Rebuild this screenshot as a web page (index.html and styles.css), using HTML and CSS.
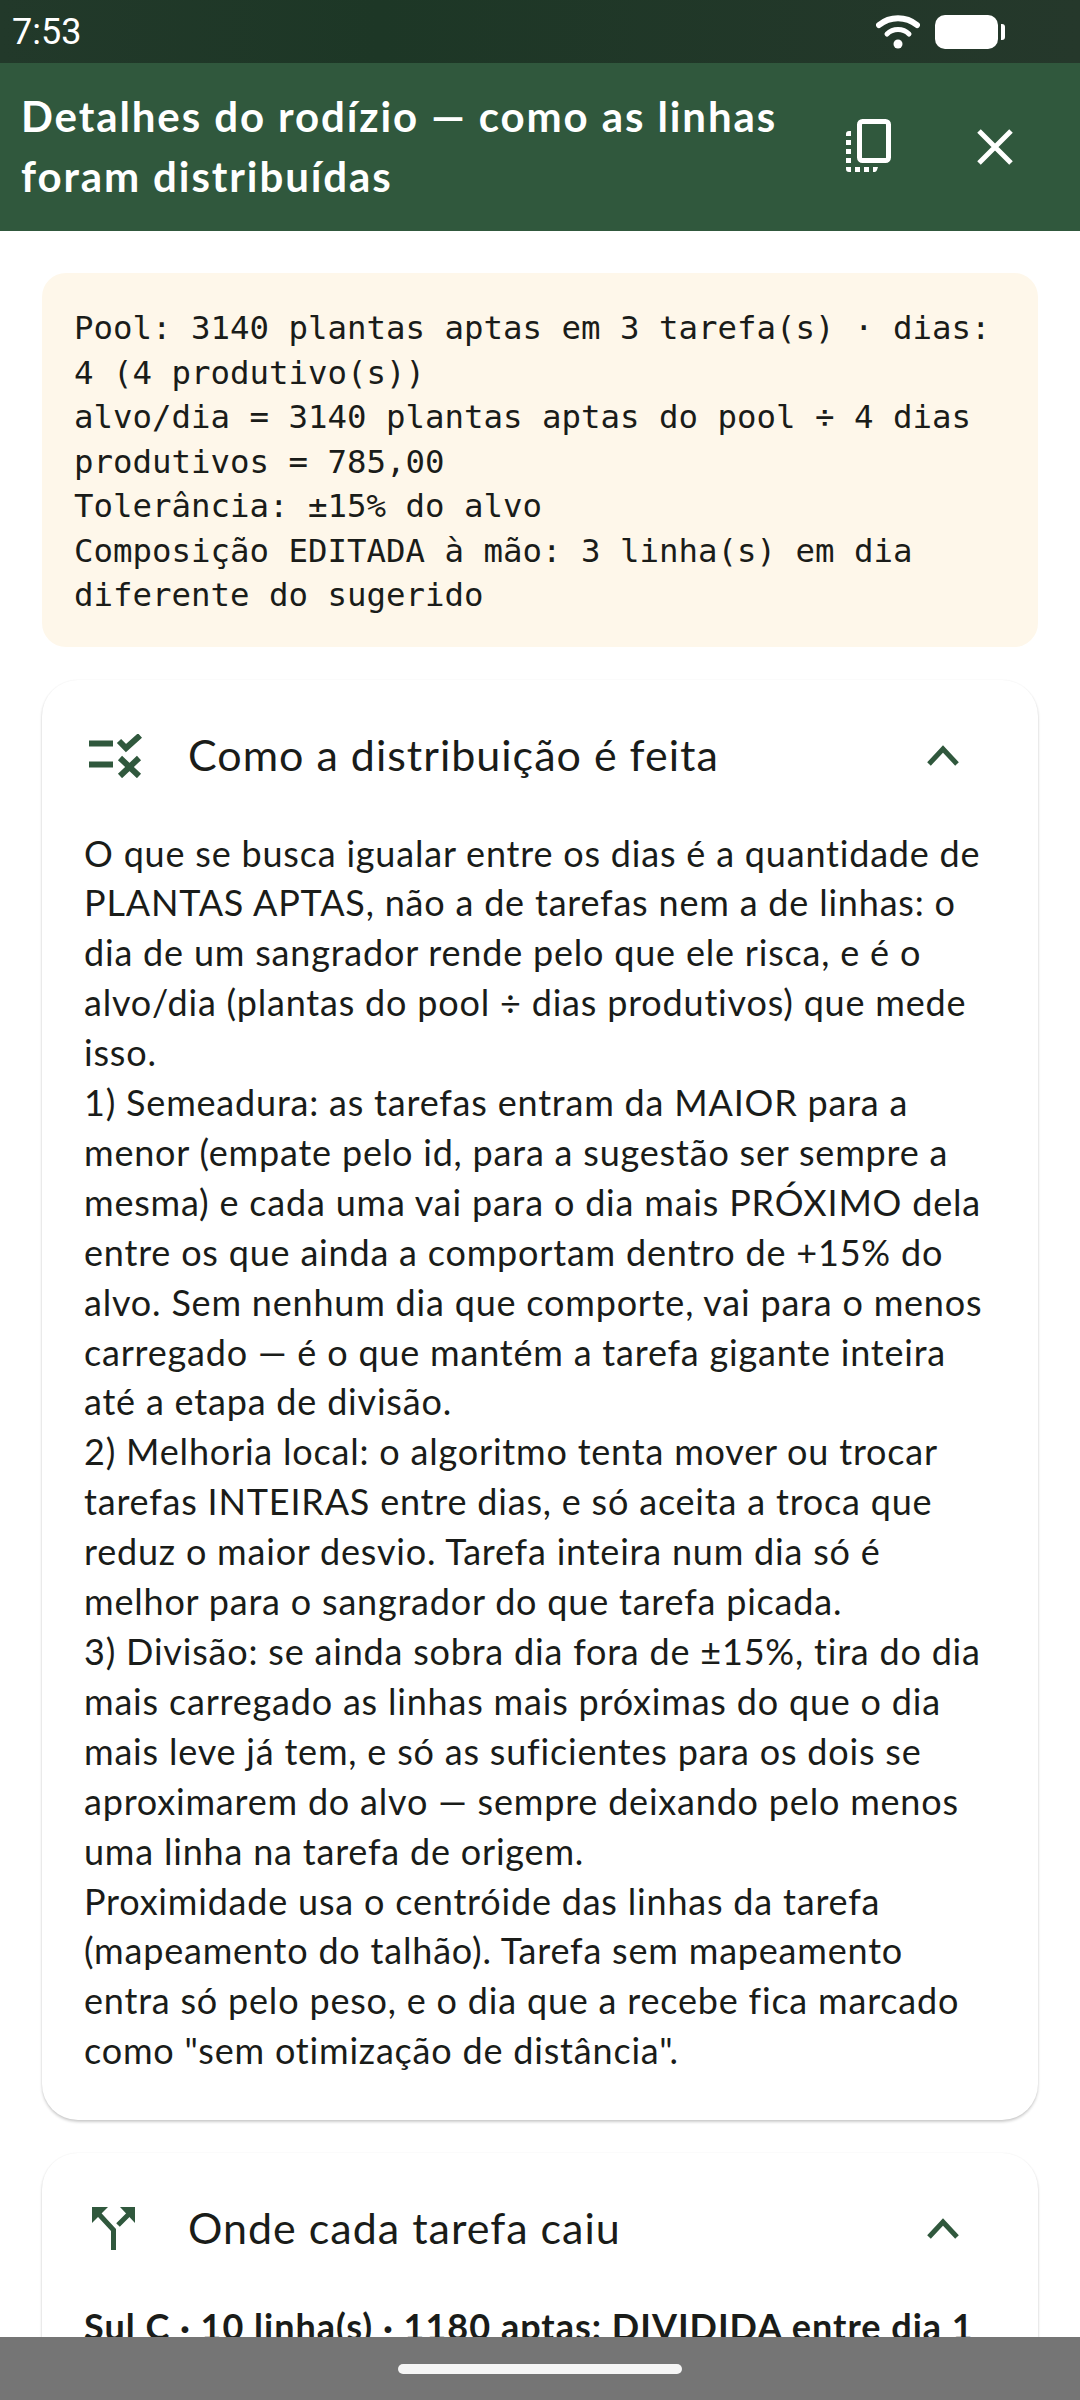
FILE: index.html
```html
<!DOCTYPE html>
<html lang="pt">
  <head>
    <meta charset="UTF-8" />
    <title>Detalhes do rodízio</title>
    <link rel="stylesheet" href="styles.css">
  </head>
  <body>
    <div class="screen">
      <div class="status-bar">
        <span class="clock">7:53</span>
        <div class="status-icons">
          <svg class="wifi" width="44" height="34" viewBox="0 0 44 34">
            <path d="M3 10 C14 1 30 1 41 10" fill="none" stroke="#fff" stroke-width="6" stroke-linecap="round" />
            <path d="M11 19 C17 13 27 13 33 19" fill="none" stroke="#fff" stroke-width="5" stroke-linecap="round" />
            <circle cx="22" cy="29" r="4.5" fill="#fff" />
          </svg>
          <div class="battery"></div>
          <div class="battery-tip"></div>
        </div>
      </div>

      <header class="app-bar">
        <h1 class="app-title">Detalhes do rodízio — como as linhas<br>foram distribuídas</h1>
        <button class="icon-btn copy-btn">
          <svg width="48" height="56" viewBox="0 0 48 56">
            <rect x="15.5" y="2.5" width="29" height="39" rx="3" fill="none" stroke="#fff" stroke-width="5" />
            <path d="M5 12 h2 v5 h-5 v-2 a3 3 0 0 1 3 -3 z M2 21 h5 v5 h-5 z M2 30 h5 v5 h-5 z M2 39 h5 v5 h-5 z M2 48 h5 v5 h-2 a3 3 0 0 1 -3 -3 z M11 48 h5 v5 h-5 z M20 48 h5 v5 h-5 z M29 48 h5 l-1 3 a3 3 0 0 1 -2 2 h-2 z" fill="#fff" />
          </svg>
        </button>
        <button class="icon-btn close-btn">
          <svg width="38" height="38" viewBox="0 0 38 38">
            <path d="M3 3 L35 35 M35 3 L3 35" stroke="#fff" stroke-width="5" fill="none" />
          </svg>
        </button>
      </header>

      <main class="content">
        <pre class="summary">Pool: 3140 plantas aptas em 3 tarefa(s) · dias:
4 (4 produtivo(s))
alvo/dia = 3140 plantas aptas do pool ÷ 4 dias
produtivos = 785,00
Tolerância: ±15% do alvo
Composição EDITADA à mão: 3 linha(s) em dia
diferente do sugerido</pre>

        <section class="card">
          <div class="card-head">
            <svg class="card-icon" width="56" height="44" viewBox="0 0 56 44">
              <path d="M1 9.5 H25 M1 30.5 H25" stroke="#30583d" stroke-width="6" fill="none" />
              <path d="M31 7 L38 14 L52 1.500" stroke="#30583d" stroke-width="6" fill="none" />
              <path d="M32 24 L51 42 M51 24 L32 42" stroke="#30583d" stroke-width="6" fill="none" />
            </svg>
            <h2 class="card-title">Como a distribuição é feita</h2>
            <svg class="chevron" width="32" height="22" viewBox="0 0 32 22">
              <path d="M2 19 L16 4 L30 19" stroke="#30583d" stroke-width="5" fill="none" />
            </svg>
          </div>
          <p class="card-text">O que se busca igualar entre os dias é a quantidade de<br>PLANTAS APTAS, não a de tarefas nem a de linhas: o<br>dia de um sangrador rende pelo que ele risca, e é o<br>alvo/dia (plantas do pool ÷ dias produtivos) que mede<br>isso.<br>1) Semeadura: as tarefas entram da MAIOR para a<br>menor (empate pelo id, para a sugestão ser sempre a<br>mesma) e cada uma vai para o dia mais PRÓXIMO dela<br>entre os que ainda a comportam dentro de +15% do<br>alvo. Sem nenhum dia que comporte, vai para o menos<br>carregado — é o que mantém a tarefa gigante inteira<br>até a etapa de divisão.<br>2) Melhoria local: o algoritmo tenta mover ou trocar<br>tarefas INTEIRAS entre dias, e só aceita a troca que<br>reduz o maior desvio. Tarefa inteira num dia só é<br>melhor para o sangrador do que tarefa picada.<br>3) Divisão: se ainda sobra dia fora de ±15%, tira do dia<br>mais carregado as linhas mais próximas do que o dia<br>mais leve já tem, e só as suficientes para os dois se<br>aproximarem do alvo — sempre deixando pelo menos<br>uma linha na tarefa de origem.<br>Proximidade usa o centróide das linhas da tarefa<br>(mapeamento do talhão). Tarefa sem mapeamento<br>entra só pelo peso, e o dia que a recebe fica marcado<br>como "sem otimização de distância".</p>
        </section>

        <section class="card">
          <div class="card-head">
            <svg class="card-icon" width="56" height="48" viewBox="0 0 56 48">
              <path d="M4 2 H20 L4 18 Z M32 2 H47 V18 Z" fill="#30583d" />
              <path d="M8 6 L25.500 25 V45 M30 20 L43 7" stroke="#30583d" stroke-width="5" fill="none" />
            </svg>
            <h2 class="card-title">Onde cada tarefa caiu</h2>
            <svg class="chevron" width="32" height="22" viewBox="0 0 32 22">
              <path d="M2 19 L16 4 L30 19" stroke="#30583d" stroke-width="5" fill="none" />
            </svg>
          </div>
          <p class="card-text card-text-strong">Sul C · 10 linha(s) · 1180 aptas: DIVIDIDA entre dia 1</p>
        </section>
      </main>

      <div class="nav-bar">
        <div class="nav-handle"></div>
      </div>
    </div>
  </body>
</html>
```

FILE: styles.css
```css
html,
body {
  margin: 0;
  height: 100%;
  background: #fff;
}

.screen {
  width: 1080px;
  height: 2400px;
  display: flex;
  flex-direction: column;
  overflow: hidden;
  font-family: Lato, "Noto Sans", sans-serif;
  color: #1a1c19;
}

/* barra do sistema */
.status-bar {
  height: 63px;
  flex: none;
  display: flex;
  align-items: center;
  justify-content: space-between;
  padding: 0 75px 0 12px;
  background: linear-gradient(90deg, #22392a, #1d3726 35%, #25382b);
  color: #fff;
}

.clock {
  font-family: Roboto, sans-serif;
  font-size: 36px;
}

.status-icons {
  display: flex;
  align-items: center;
}

.wifi {
  margin-right: 15px;
}

.battery {
  width: 63px;
  height: 34px;
  border-radius: 10px;
  background: #fff;
}

.battery-tip {
  width: 4px;
  height: 16px;
  margin-left: 3px;
  border-radius: 0 3px 3px 0;
  background: #fff;
}

/* topo */
.app-bar {
  height: 168px;
  flex: none;
  display: flex;
  align-items: center;
  padding: 0 66px 0 21px;
  background: #30583d;
}

.app-title {
  flex: 1;
  margin: 0 0 3px;
  color: #fff;
  font-size: 42px;
  font-weight: 700;
  letter-spacing: 1.9px;
  line-height: 60px;
  white-space: nowrap;
}

.icon-btn {
  padding: 0;
  border: none;
  background: none;
  display: flex;
}

.copy-btn {
  margin-right: 84px;
}

/* conteudo */
.content {
  flex: 1;
  min-height: 0;
  overflow: hidden;
  display: flex;
  flex-direction: column;
  gap: 33px;
  padding: 42px 42px 0;
}

.summary {
  flex: none;
  margin: 0;
  padding: 33px 32px 29px;
  background: #fef7ea;
  border-radius: 24px;
  font-family: "DejaVu Sans Mono", monospace;
  font-size: 32.4px;
  line-height: 44.5px;
}

.card {
  flex: none;
  background: #fff;
  border-radius: 36px;
  box-shadow: 0 2px 3px rgba(0, 0, 0, 0.2), 0 0 2px rgba(0, 0, 0, 0.05);
  padding: 0 42px 44px;
}

.card-head {
  height: 149px;
  display: flex;
  align-items: center;
}

.card-icon {
  flex: none;
  margin: 3px 44px 0 4px;
}

.card-title {
  flex: 1;
  margin: 0;
  font-size: 43px;
  font-weight: 400;
  letter-spacing: 1px;
}

.chevron {
  flex: none;
  margin: 3px 37px 0 0;
}

.card-text {
  margin: 0;
  font-size: 36px;
  letter-spacing: 0.8px;
  line-height: 49.9px;
  white-space: nowrap;
}

.card-text-strong {
  font-weight: 700;
  letter-spacing: 1px;
}

/* barra de navegacao */
.nav-bar {
  height: 63px;
  flex: none;
  display: flex;
  justify-content: center;
  padding-top: 27px;
  box-sizing: border-box;
  background: #757575;
}

.nav-handle {
  width: 284px;
  height: 10px;
  border-radius: 5px;
  background: #f5f5f5;
}
```
